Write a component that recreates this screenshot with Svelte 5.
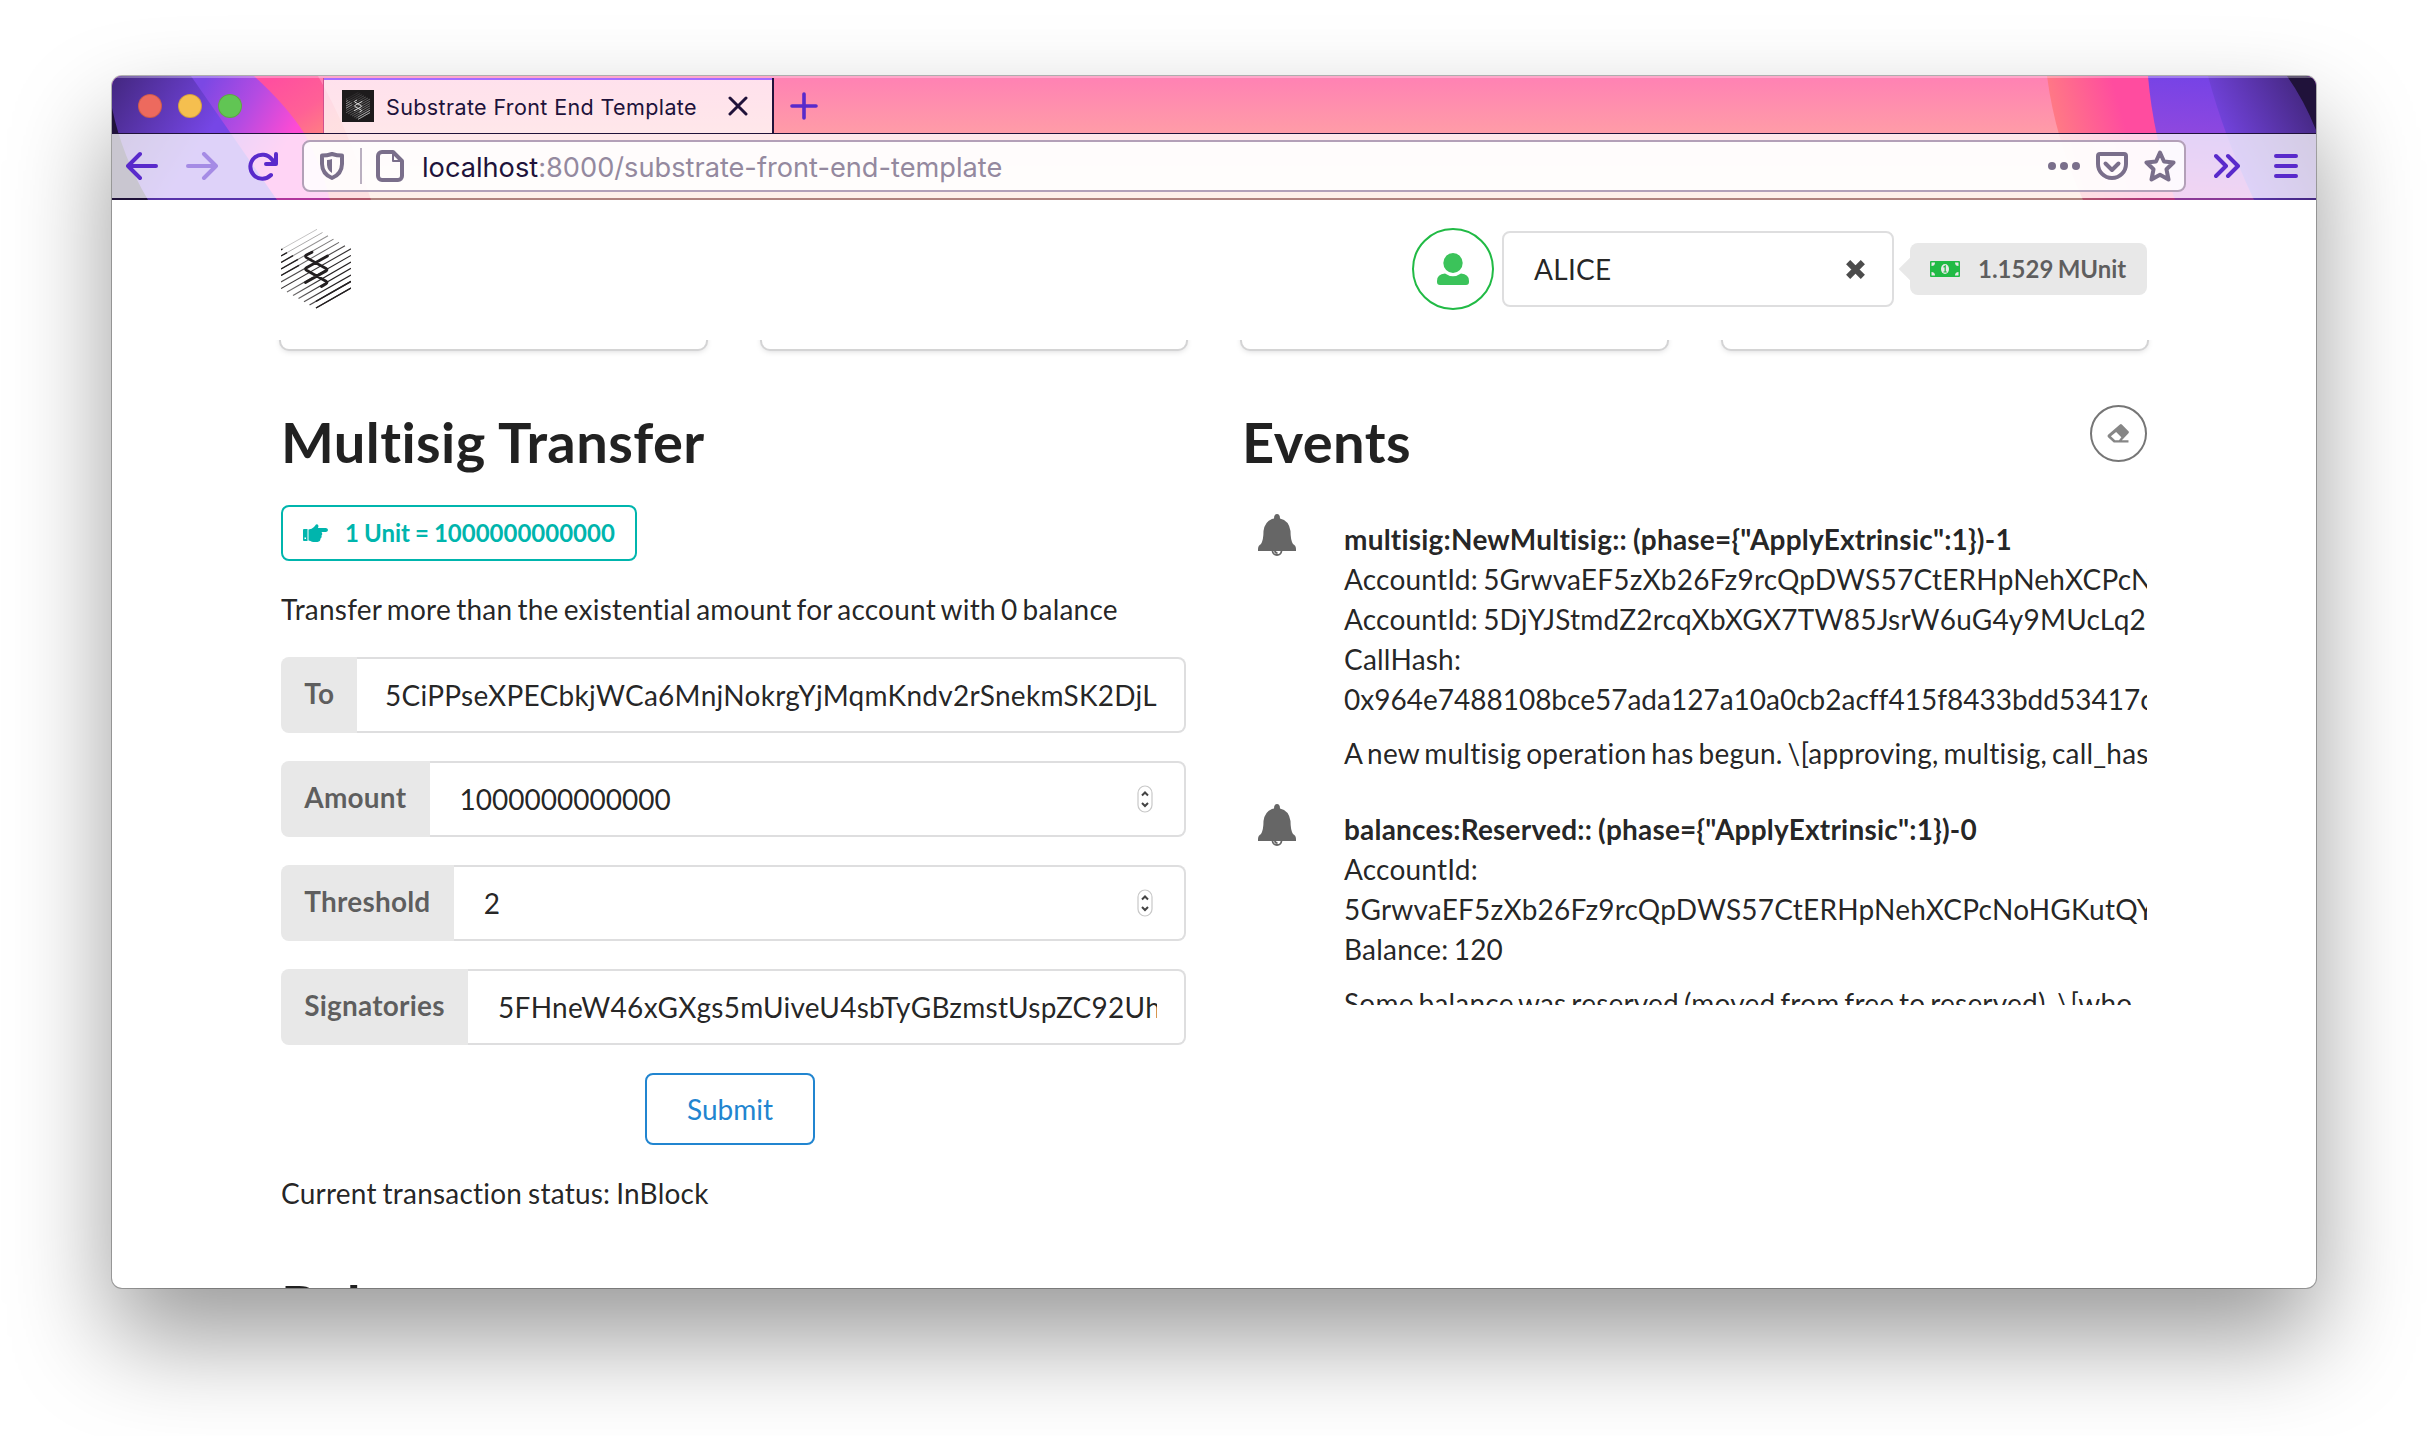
<script>
  const fields = [
    { label: 'To', value: '5CiPPseXPECbkjWCa6MnjNokrgYjMqmKndv2rSnekmSK2DjL', kind: 'address' },
    { label: 'Amount', value: '1000000000000', kind: 'number' },
    { label: 'Threshold', value: '2', kind: 'number' },
    { label: 'Signatories', value: '5FHneW46xGXgs5mUiveU4sbTyGBzmstUspZC92UhjJM', kind: 'list' }
  ];

  const events = [
    {
      title: 'multisig:NewMultisig:: (phase={"ApplyExtrinsic":1})-1',
      lines: [
        'AccountId: 5GrwvaEF5zXb26Fz9rcQpDWS57CtERHpNehXCPcNo',
        'AccountId: 5DjYJStmdZ2rcqXbXGX7TW85JsrW6uG4y9MUcLq2',
        'CallHash:',
        '0x964e7488108bce57ada127a10a0cb2acff415f8433bdd53417c'
      ],
      note: 'A new multisig operation has begun. \\[approving, multisig, call_hash\\]'
    },
    {
      title: 'balances:Reserved:: (phase={"ApplyExtrinsic":1})-0',
      lines: ['AccountId:', '5GrwvaEF5zXb26Fz9rcQpDWS57CtERHpNehXCPcNoHGKutQY', 'Balance: 120'],
      note: 'Some balance was reserved (moved from free to reserved). \\[who,'
    }
  ];

  // Parallel hatch lines of the hexagonal logo: x1, y1, x2, y2
  const hatch = [
    [0, 20.5, 36, 0.3], [0, 27, 41.5, 3.5], [0, 33.5, 47, 6.8], [0, 40, 52.5, 10.1],
    [0, 46.5, 58, 13.4], [0, 53, 64, 16.7], [0, 59.6, 70, 19.8], [6, 63, 70, 26.4],
    [12, 66.5, 70, 33], [17.5, 69.5, 70, 39.4], [23, 72.8, 70, 46], [28.5, 76, 70, 52.4],
    [35, 79, 70, 59]
  ];
</script>

{#snippet logo(id)}
  <svg class="logo" viewBox="0 0 70 80">
    <defs>
      <linearGradient id="{id}-top" gradientUnits="userSpaceOnUse" x1="14" y1="8" x2="34" y2="42">
        <stop offset="0" stop-color="currentColor" stop-opacity=".2" />
        <stop offset="1" stop-color="currentColor" stop-opacity=".95" />
      </linearGradient>
      <linearGradient id="{id}-bottom" gradientUnits="userSpaceOnUse" x1="12" y1="66" x2="46" y2="54">
        <stop offset="0" stop-color="currentColor" stop-opacity=".65" />
        <stop offset="1" stop-color="currentColor" stop-opacity="1" />
      </linearGradient>
    </defs>
    {#each hatch as [x1, y1, x2, y2], i}
      <line {x1} {y1} {x2} {y2} stroke={i < 7 ? `url(#${id}-top)` : `url(#${id}-bottom)`} stroke-width={0.95 + i * 0.03} />
    {/each}
    <path d="M0 20.8l1.5-.8M0 27l6-3.4M0 33.5l12-6.8M0 40l17-9.7M0 46.5l18-10.2M35 79l35-20M35 72.4l35-20" stroke="currentColor" stroke-width="1.4" />
    <path d="M31 23.2L25.5 26Q23.5 27.3 25.5 28.600L45 39.500Q47 40.700 45 42L24.500 53.500M46.500 27L25.500 38.700Q23.500 40 25.500 41.200L45 52.200Q47 53.600 45 54.900L40.500 57.500" fill="none" stroke="currentColor" stroke-width="2.800" stroke-linecap="round" />
  </svg>
{/snippet}

<div class="desktop">
  <div class="window">
    <div class="chrome">
      <svg class="theme" viewBox="0 0 2204 124" preserveAspectRatio="none">
        <defs>
          <linearGradient id="main" x1="0" y1="0" x2="0" y2="1">
            <stop offset="0" stop-color="#ff81b4" /><stop offset=".46" stop-color="#ff9ca7" /><stop offset="1" stop-color="#ffc0a3" />
          </linearGradient>
          <linearGradient id="l1" gradientUnits="userSpaceOnUse" x1="0" y1="0" x2="95" y2="60">
            <stop offset="0" stop-color="#43277f" /><stop offset="1" stop-color="#7646e6" />
          </linearGradient>
          <linearGradient id="l2" gradientUnits="userSpaceOnUse" x1="90" y1="10" x2="180" y2="60">
            <stop offset="0" stop-color="#7b48e4" /><stop offset=".5" stop-color="#b44be2" /><stop offset="1" stop-color="#ff4bd3" />
          </linearGradient>
          <linearGradient id="l3" gradientUnits="userSpaceOnUse" x1="165" y1="0" x2="205" y2="60">
            <stop offset="0" stop-color="#ff4f9f" /><stop offset=".6" stop-color="#ff6096" /><stop offset="1" stop-color="#ff7c84" />
          </linearGradient>
          <linearGradient id="r1" gradientUnits="userSpaceOnUse" x1="1935" y1="40" x2="2005" y2="20">
            <stop offset="0" stop-color="#ff7e82" /><stop offset="1" stop-color="#ff4c9f" />
          </linearGradient>
          <linearGradient id="r2" gradientUnits="userSpaceOnUse" x1="2070" y1="0" x2="2060" y2="124">
            <stop offset="0" stop-color="#7643e6" /><stop offset=".5" stop-color="#9048de" /><stop offset="1" stop-color="#c850c8" />
          </linearGradient>
          <linearGradient id="r3" gradientUnits="userSpaceOnUse" x1="2110" y1="60" x2="2190" y2="20">
            <stop offset="0" stop-color="#7444e0" /><stop offset="1" stop-color="#472986" />
          </linearGradient>
        </defs>
        <rect width="2204" height="124" fill="url(#main)" />
        <path d="M0 0H206Q235 50 259 124H0z" fill="url(#l3)" />
        <path d="M0 0H142Q175 30 192 57 210 90 218 124H0z" fill="url(#l2)" />
        <path d="M0 0H79L165 124H0z" fill="url(#l1)" />
        <path d="M0 32Q10 80 36 124H0z" fill="#20123a" />
        <path d="M1935 0Q1943 62 1971 124H2204V0z" fill="url(#r1)" />
        <path d="M2036 0Q2041 60 2063 124H2204V0z" fill="url(#r2)" />
        <path d="M2096 0Q2112 60 2142 124H2204V0z" fill="url(#r3)" />
        <path d="M2175 0Q2192 24 2204 54V0z" fill="#20123a" />
      </svg>

      <div class="tabbar">
        <div class="lights"><i class="red"></i><i class="amber"></i><i class="green"></i></div>
        <div class="tab">
          <span class="favicon">{@render logo('favicon')}</span>
          <span class="tab-title">Substrate Front End Template</span>
          <svg class="tab-close" viewBox="0 0 20 20"><path d="M2 2l16 16M18 2L2 18" /></svg>
        </div>
        <svg class="tab-new" viewBox="0 0 28 28"><path d="M14 2v24M2 14h24" /></svg>
      </div>

      <div class="toolbar">
        <svg class="nav" viewBox="0 0 32 32"><path d="M2 16h28M14 4L2 16l12 12" /></svg>
        <svg class="nav dim" viewBox="0 0 32 32"><path d="M2 16h28M18 4l12 12-12 12" /></svg>
        <svg class="nav reload" viewBox="0 0 32 32">
          <path d="M25 25A12 12 0 1 1 26 9.500L28.500 13" />
          <path d="M30 4v10H20" />
        </svg>
        <div class="urlbar">
          <svg class="u-icon shield" viewBox="0 0 24 28"><path d="M12 2Q7 3.600 2 3.600V12Q2.200 22 12 26 21.800 22 22 12V3.600Q17 3.600 12 2z" /><path class="fill" d="M12 7Q9.500 8 7 8v5Q7.500 18.500 12 21z" /></svg>
          <span class="divider"></span>
          <svg class="u-icon doc" viewBox="0 0 28 32"><path d="M6 2H17L26 11V26a4 4 0 0 1-4 4H6a4 4 0 0 1-4-4V6a4 4 0 0 1 4-4z" /><path class="thin" d="M17 2v9h9" /></svg>
          <span class="url"><b>localhost</b>:8000/substrate-front-end-template</span>
          <svg class="u-icon dots" viewBox="0 0 32 8"><circle cx="4" cy="4" r="4" /><circle cx="16" cy="4" r="4" /><circle cx="28" cy="4" r="4" /></svg>
          <svg class="u-icon pocket" viewBox="0 0 32 28"><path d="M4 2H28Q30 2 30 4V12A14 14 0 0 1 2 12V4Q2 2 4 2z" /><path d="M9.500 11.500L16 18l6.500-6.500" /></svg>
          <svg class="u-icon star" viewBox="0 0 32 32"><path d="M16 2.500L20 11.500 29.500 12.500 22.500 19.300 24.500 29.500 16 24.800 7.500 29.500 9.500 19.300 2.500 12.500 12 11.500z" /></svg>
        </div>
        <svg class="nav more" viewBox="0 0 26 26"><path d="M2 3l10 10L2 23M14 3l10 10-10 10" /></svg>
        <svg class="nav menu" viewBox="0 0 24 24"><path d="M2 2h20M2 12h20M2 22h20" /></svg>
      </div>
    </div>

    <header>
      {@render logo('brand')}
      <div class="account">
        <span class="avatar">
          <svg viewBox="0 0 32 32"><ellipse cx="16" cy="10" rx="9.700" ry="10" /><path d="M8 20.500Q16 26 24 20.500 32 21 32 28V29Q32 32 29 32H3Q0 32 0 29V28Q0 21 8 20.500z" /></svg>
        </span>
        <div class="dropdown">
          <span>ALICE</span>
          <svg viewBox="0 0 20 20"><path d="M3 3l14 14M17 3L3 17" /></svg>
        </div>
        <div class="balance">
          <svg viewBox="0 0 30 16">
            <rect width="30" height="16" rx="1" fill="#21ba45" />
            <path d="M1.500 5V1.500H5A3.500 3.500 0 0 1 1.500 5zM28.500 5V1.500H25A3.500 3.500 0 0 0 28.500 5zM1.500 11V14.500H5A3.500 3.500 0 0 0 1.500 11zM28.500 11V14.500H25A3.500 3.500 0 0 1 28.500 11z" fill="#e8e8e8" />
            <ellipse cx="15" cy="8" rx="4" ry="5" fill="#e8e8e8" />
            <path d="M13.500 6.200L15.200 5V11M13.500 11H16.800" stroke="#21ba45" stroke-width="1.200" fill="none" />
          </svg>
          <span>1.1529 MUnit</span>
        </div>
      </div>
    </header>

    <div class="cards"><div></div><div></div><div></div><div></div></div>

    <main>
      <section>
        <h1>Multisig Transfer</h1>
        <div class="unit">
          <svg viewBox="0 0 25 18">
            <path fill-rule="evenodd" d="M0 6Q0 5 1 5H4.500V17H1Q0 17 0 16zM1.500 13.500V15H3V13.500z" />
            <path d="M5.500 5.500Q9 5 11 3L13 .5Q15 -.5 15.500 2L15 4H23Q25 4.300 25 6T23 8H18.500Q20 10 18.500 11.500 19 13.500 17.500 14.500 17.500 17.500 14.500 18 10 18.500 7.500 17L5.500 16.500z" />
          </svg>
          <span>1 Unit = 1000000000000</span>
        </div>
        <p>Transfer more than the existential amount for account with 0 balance</p>
        {#each fields as field}
          <label class="field {field.kind}">
            <span class="field-label">{field.label}</span>
            <span class="field-box">
              <input type="text" value={field.value} readonly />
              {#if field.kind === 'number'}
                <svg class="spinner" viewBox="0 0 16 28"><rect x="1" y="1" width="14" height="26" rx="7" /><path d="M5 10.500L8 7.500l3 3M5 18l3 3 3-3" /></svg>
              {/if}
            </span>
          </label>
        {/each}
        <button class="submit">Submit</button>
        <p class="status">Current transaction status: InBlock</p>
        <h1 class="next">Balances</h1>
      </section>

      <section>
        <div class="events-head">
          <h1>Events</h1>
          <button class="clear" aria-label="Clear events">
            <svg viewBox="0 0 24 20"><path fill-rule="evenodd" d="M13.500 .5Q14.500 -.3 15.500 .5L22.500 7.500Q23.500 8.500 22.500 9.700L15.500 17H22.500V19.500H7L1 14Q0 12.500 1 11.300zM9.500 8.500L4 12.800 8.500 17H12.500L15 14z" /></svg>
          </button>
        </div>
        <div class="feed">
          {#each events as event}
            <article>
              <svg class="bell" viewBox="0 0 38 42">
                <path d="M19 0Q22 0 22 4.500 31 6.500 32.500 17 32.500 26 35 30 38 31.500 38 35V37H0V35Q0 31.500 3 30 5.500 26 5.500 17 7 6.500 16 4.500 16 0 19 0z" />
                <path class="clapper" d="M14.500 37Q15 41 19 41T23.500 37M17 37Q17 39 19.500 39" />
              </svg>
              <div class="event">
                <strong>{event.title}</strong>
                {#each event.lines as line}<span class:hex={line.startsWith('0x')}>{line}</span>{/each}
                <span class="note">{event.note}</span>
              </div>
            </article>
          {/each}
        </div>
      </section>
    </main>
  </div>
</div>

<style>
  :global(body) { margin: 0; background: #fff; }
  * { box-sizing: border-box; }
  svg { display: block; flex: none; }

  .desktop {
    width: 2428px;
    height: 1436px;
    padding: 76px 112px 0;
    overflow: hidden;
    background: #fff;
    font-family: Lato, "Liberation Sans", sans-serif;
    font-size: 28px;
    line-height: 40px;
    font-variant-ligatures: none;
    color: rgba(0, 0, 0, .87);
  }
  .window {
    height: 1212px;
    display: flex;
    flex-direction: column;
    overflow: hidden;
    border-radius: 10px;
    background: #fff;
    box-shadow: 0 0 0 1px rgba(0, 0, 0, .28), 0 50px 100px rgba(0, 0, 0, .4);
  }

  .chrome { position: relative; flex: none; height: 124px; }
  .theme { position: absolute; inset: 0; width: 100%; height: 100%; }
  .tabbar {
    position: relative;
    display: flex;
    align-items: center;
    height: 58px;
    border-top: 2px solid rgba(255, 255, 255, .3);
    border-bottom: 1px solid #20123a;
  }
  .lights { display: flex; gap: 16px; padding-left: 26px; width: 211px; }
  .lights i { width: 24px; height: 24px; border-radius: 50%; border: 1px solid rgba(90, 40, 0, .2); }
  .red { background: #ed6a5e; }
  .amber { background: #f5bf4f; }
  .green { background: #61c554; }
  .tab {
    display: flex;
    align-items: center;
    align-self: stretch;
    width: 451px;
    padding: 0 24px 0 18px;
    border-left: 1px solid #d0508c;
    border-right: 2px solid #20123a;
    background: linear-gradient(#a66bff 0 2px, rgba(255, 255, 255, .76) 2px);
    background-clip: padding-box;
  }
  .favicon {
    display: grid;
    place-items: center;
    width: 32px;
    height: 32px;
    background: #1d1b1c;
  }
  .tab-title {
    flex: 1;
    padding: 2px 0 0 12px;
    font: 21.5px/28px Inter, sans-serif;
    letter-spacing: .38px;
    white-space: nowrap;
    color: #20123a;
  }
  .tab-close { width: 20px; height: 20px; }
  .tab-close path { fill: none; stroke: #20123a; stroke-width: 3; stroke-linecap: round; }
  .tab-new { width: 28px; height: 28px; margin-left: 16px; }
  .tab-new path { fill: none; stroke: #592acb; stroke-width: 3.600; stroke-linecap: round; }

  .toolbar {
    position: relative;
    display: flex;
    align-items: center;
    height: 66px;
    padding: 0 18px 0 14px;
    background: rgba(255, 255, 255, .76);
    border-bottom: 2px solid rgba(32, 18, 58, .35);
    background-clip: padding-box;
  }
  .nav { width: 32px; height: 32px; margin-right: 28px; }
  .nav path { fill: none; stroke: #592acb; stroke-width: 4; stroke-linecap: round; stroke-linejoin: round; }
  .dim { opacity: .42; }
  .reload { margin: 0 24px 0 0; }
  .urlbar {
    display: flex;
    align-items: center;
    width: 1884px;
    height: 52px;
    padding: 0 8px 0 16px;
    border: 2px solid #b3a0b8;
    border-radius: 8px;
    background: rgba(255, 255, 255, .86);
  }
  .u-icon path { fill: none; stroke: #7a6f8b; stroke-width: 4; stroke-linejoin: round; stroke-linecap: round; }
  .u-icon path.fill, .u-icon circle { fill: #7a6f8b; stroke: none; }
  .u-icon path.thin { stroke-width: 2; }
  .shield { width: 24px; height: 28px; }
  .divider { width: 2px; height: 36px; margin: 0 14px 0 16px; background: #bab0c0; }
  .doc { width: 28px; height: 32px; }
  .url {
    flex: 1;
    padding: 4px 0 0 18px;
    font: 27.2px/36px Inter, sans-serif;
    white-space: nowrap;
    color: #94899f;
  }
  .url b { font-weight: 400; color: #20123a; }
  .dots { width: 32px; height: 8px; margin-right: 16px; }
  .pocket { width: 32px; height: 28px; margin-right: 16px; }
  .star { width: 32px; height: 32px; }
  .more { width: 26px; height: 26px; margin: 0 34px 0 28px; }
  .menu { width: 24px; height: 24px; margin: 0; }

  header {
    flex: none;
    display: flex;
    align-items: center;
    justify-content: space-between;
    height: 140px;
    padding: 0 169px 2px;
  }
  .logo { width: 70px; height: 80px; color: #231f20; }
  .favicon .logo { width: 24px; height: 28px; color: #ddd; }
  .account { display: flex; align-items: center; }
  .avatar {
    display: grid;
    place-items: center;
    width: 82px;
    height: 82px;
    margin-right: 8px;
    border: 2px solid #21ba45;
    border-radius: 50%;
  }
  .avatar svg { width: 32px; height: 32px; fill: #3bc35a; }
  .dropdown {
    display: flex;
    align-items: center;
    justify-content: space-between;
    width: 392px;
    height: 76px;
    padding: 0 26px 0 30px;
    border: 2px solid #dededf;
    border-radius: 8px;
  }
  .dropdown span { letter-spacing: .3px; }
  .dropdown svg { width: 21px; height: 21px; }
  .dropdown path { fill: none; stroke: #4c4c4c; stroke-width: 5.600; }
  .balance {
    position: relative;
    display: flex;
    align-items: center;
    gap: 18px;
    width: 237px;
    height: 52px;
    margin-left: 16px;
    padding-left: 20px;
    border-radius: 8px;
    background: #e8e8e8;
    color: rgba(0, 0, 0, .6);
    font-size: 24px;
    font-weight: 700;
    word-spacing: -1.500px;
    white-space: nowrap;
  }
  .balance::before {
    content: "";
    position: absolute;
    left: -8px;
    top: 18px;
    width: 16px;
    height: 16px;
    background: #e8e8e8;
    transform: rotate(45deg);
  }
  .balance svg { width: 30px; height: 16px; }

  .cards {
    flex: none;
    display: grid;
    grid-template-columns: repeat(4, 1fr);
    gap: 56px;
    height: 20px;
    padding: 0 169px;
    margin-bottom: 45px;
    overflow: hidden;
  }
  .cards div {
    height: 28px;
    margin-top: -19px;
    border-radius: 8px;
    box-shadow: 0 2px 6px #d4d4d5, 0 0 0 2px #d4d4d5;
    background: #fff;
  }

  main { flex: none; display: grid; grid-template-columns: 905px 905px; gap: 56px; padding: 0 169px; }
  h1 {
    margin: 0 0 27px;
    padding-top: 1px;
    font-size: 56px;
    line-height: 72px;
    font-weight: 700;
    letter-spacing: .42px;
  }
  p { margin: 28px 0; letter-spacing: .22px; word-spacing: -2.200px; white-space: nowrap; }
  .unit {
    display: flex;
    align-items: center;
    gap: 17px;
    width: 356px;
    height: 56px;
    padding-left: 20px;
    border: 2px solid #00b5ad;
    border-radius: 8px;
    color: #00b5ad;
    font-size: 24px;
    font-weight: 700;
    word-spacing: -.8px;
    white-space: nowrap;
  }
  .unit svg { width: 25px; height: 18px; fill: #00b5ad; }
  .field { display: flex; height: 76px; margin-bottom: 28px; }
  .field-label {
    padding: 16px 23.300px 0;
    border-radius: 8px 0 0 8px;
    background: #e8e8e8;
    color: rgba(0, 0, 0, .6);
    font-weight: 700;
    letter-spacing: .2px;
  }
  .field-box {
    flex: 1;
    min-width: 0;
    display: flex;
    align-items: center;
    padding: 0 27px 0 30px;
    border: 2px solid #dededf;
    border-left: 0;
    border-radius: 0 8px 8px 0;
  }
  .address .field-label { padding-right: 22.800px; }
  .address .field-box { padding-left: 28px; }
  input {
    flex: 1;
    min-width: 0;
    padding: 0;
    border: 0;
    outline: 0;
    background: none;
    font: inherit;
    font-variant-ligatures: none;
    letter-spacing: .27px;
    color: inherit;
  }
  .number input { letter-spacing: 0; }
  .spinner { width: 16px; height: 28px; margin-right: 4px; }
  .spinner rect { fill: #fff; stroke: #c8c8c8; stroke-width: 1.200; }
  .spinner path { fill: none; stroke: #444; stroke-width: 2; }
  button { font: inherit; background: none; padding: 0; }
  .submit {
    display: block;
    width: 170px;
    height: 72px;
    margin-left: 364px;
    border: 2px solid #2185d0;
    border-radius: 8px;
    color: #2185d0;
  }
  .status { margin-bottom: 55px; word-spacing: -1.500px; }
  .next { margin: 0; }

  .events-head { display: flex; justify-content: space-between; align-items: flex-start; }
  .clear {
    display: grid;
    place-items: center;
    width: 57px;
    height: 57px;
    border: 2px solid #767676;
    border-radius: 50%;
  }
  .clear svg { width: 23px; height: 19px; fill: #868686; }
  .feed { height: 500px; overflow: hidden; }
  article { display: flex; padding: 9px 0 22px 16px; }
  .bell { width: 38px; height: 42px; fill: #666; }
  .clapper { fill: none; stroke: #666; stroke-width: 1.800; }
  .event {
    flex: 1;
    min-width: 0;
    margin-left: 48px;
    padding-top: 5px;
    letter-spacing: .21px;
    word-spacing: -2.200px;
    white-space: nowrap;
  }
  .event strong, .event span { display: block; }
  .event strong { word-spacing: -1px; }
  .event .hex { letter-spacing: 0; }
  .event .note { margin-top: 14px; word-spacing: -2.500px; }
</style>
